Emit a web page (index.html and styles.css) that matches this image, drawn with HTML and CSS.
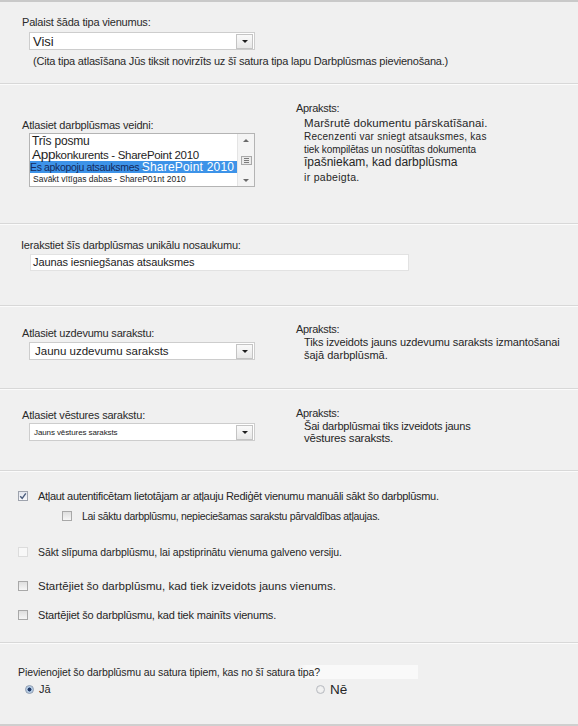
FILE: index.html
```html
<!DOCTYPE html>
<html lang="lv">
<head>
<meta charset="utf-8">
<title>Darbplūsma</title>
<link rel="stylesheet" href="styles.css">
</head>
<body>
<div class="page">

  <section class="sec s1">
    <div class="label">Palaist šāda tipa vienumus:</div>
    <div class="select sel-visi"><span class="val v-visi">Visi</span><span class="btn"></span></div>
    <div class="note">(Cita tipa atlasīšana Jūs tiksit novirzīts uz šī satura tipa lapu Darbplūsmas pievienošana.)</div>
  </section>

  <section class="sec s2 two">
    <div class="left l2">
      <div class="label">Atlasiet darbplūsmas veidni:</div>
      <div class="listbox">
        <div class="items">
          <div class="item i1">Trīs posmu</div>
          <div class="item i2"><span class="app">App</span>konkurents - SharePoint 2010</div>
          <div class="item i3"><span class="navy">Es apkopoju atsauksmes -</span><span class="wh">SharePoint 2010</span></div>
          <div class="item i4">Savākt vītīgas dabas - ShareP01nt 2010</div>
        </div>
        <div class="scroll">
          <span class="sarrow up"></span>
          <span class="thumb"><i></i><i></i><i></i></span>
          <span class="sarrow down"></span>
        </div>
      </div>
    </div>
    <div class="right r2">
      <div class="dh">Apraksts:</div>
      <div class="d d1">Maršrutē dokumentu pārskatīšanai.</div>
      <div class="d d2">Recenzenti var sniegt atsauksmes, kas</div>
      <div class="d d3">tiek kompilētas un nosūtītas dokumenta</div>
      <div class="d d4">īpašniekam, kad darbplūsma</div>
      <div class="d d5">ir pabeigta.</div>
    </div>
  </section>

  <section class="sec s3">
    <div class="label">Ierakstiet šīs darbplūsmas unikālu nosaukumu:</div>
    <div class="input">Jaunas iesniegšanas atsauksmes</div>
  </section>

  <section class="sec s4 two">
    <div class="left l4">
      <div class="label">Atlasiet uzdevumu sarakstu:</div>
      <div class="select sel-task"><span class="val v-task">Jaunu uzdevumu saraksts</span><span class="btn"></span></div>
    </div>
    <div class="right r4">
      <div class="dh">Apraksts:</div>
      <div class="d d41">Tiks izveidots jauns uzdevumu saraksts izmantošanai</div>
      <div class="d d42">šajā darbplūsmā.</div>
    </div>
  </section>

  <section class="sec s5 two">
    <div class="left l5">
      <div class="label">Atlasiet vēstures sarakstu:</div>
      <div class="select sel-hist"><span class="val v-hist">Jauns vēstures saraksts</span><span class="btn"></span></div>
    </div>
    <div class="right r5">
      <div class="dh">Apraksts:</div>
      <div class="d d51">Šai darbplūsmai tiks izveidots jauns</div>
      <div class="d d52">vēstures saraksts.</div>
    </div>
  </section>

  <section class="sec s6">
    <div class="row r-1">
      <span class="cb checked"><svg viewBox="0 0 10 10" width="10" height="10"><polyline points="2.2,5.2 4.2,7.3 7.8,2.4" fill="none" stroke="#4b5d7d" stroke-width="1.4"/></svg></span>
      <span class="t t1">Atļaut autentificētam lietotājam ar atļauju Rediģēt vienumu manuāli sākt šo darbplūsmu.</span>
    </div>
    <div class="row r-2">
      <span class="cb"></span>
      <span class="t t2">Lai sāktu darbplūsmu, nepieciešamas sarakstu pārvaldības atļaujas.</span>
    </div>
    <div class="row r-3">
      <span class="cb faint"></span>
      <span class="t t3">Sākt slīpuma darbplūsmu, lai apstiprinātu vienuma galveno versiju.</span>
    </div>
    <div class="row r-4">
      <span class="cb"></span>
      <span class="t t4">Startējiet šo darbplūsmu, kad tiek izveidots jauns vienums.</span>
    </div>
    <div class="row r-5">
      <span class="cb"></span>
      <span class="t t5">Startējiet šo darbplūsmu, kad tiek mainīts vienums.</span>
    </div>
  </section>

  <section class="sec s7">
    <div class="q">Pievienojiet šo darbplūsmu au satura tipiem, kas no šī satura tipa?</div>
    <div class="radios">
      <span class="opt opt-ja"><span class="radio on"></span><span class="rt rt-ja">Jā</span></span>
      <span class="opt opt-ne"><span class="radio"></span><span class="rt rt-ne">Nē</span></span>
    </div>
  </section>

</div>
</body>
</html>
```
FILE: styles.css
```css
html, body {
  margin: 0;
  padding: 0;
  background: #f0f0f0;
}
body {
  font-family: "Liberation Sans", Arial, sans-serif;
  font-size: 11px;
  color: #2b2b2b;
}
.page {
  width: 578px;
  height: 726px;
  box-sizing: border-box;
  border-top: 2px solid #c9c9c9;
  border-bottom: 2px solid #cfcfcf;
  display: flex;
  flex-direction: column;
}
.sec {
  box-sizing: border-box;
  border-bottom: 1px solid #d8d8d8;
  box-shadow: 0 1px 0 #fbfbfb;
  flex: none;
}
.s1 { height: 82px; padding: 14px 0 0 22px; }
.s2 { height: 140px; }
.s3 { height: 82px; padding: 14px 0 0 21px; }
.s4 { height: 83px; }
.s5 { height: 82px; }
.s6 { height: 172px; padding: 18px 0 0 18px; }
.s7 { flex: 1; border-bottom: none; box-shadow: none; padding: 22px 0 0 18px; }

.two {
  display: grid;
  grid-template-columns: 274px 1fr;
  padding-left: 22px;
}
.label {
  line-height: 14px;
  height: 14px;
  letter-spacing: -0.2px;
  color: #2a2a2a;
}
.s1 .label { height: 13px; line-height: 13px; }

/* select */
.select {
  box-sizing: border-box;
  width: 226px;
  height: 18px;
  background: #fff;
  border: 1px solid #cdcdcd;
  display: flex;
  align-items: center;
  margin-left: 7px;
}
.val { flex: 1; padding-left: 3px; color: #222; white-space: nowrap; overflow: hidden; }
.v-visi { font-size: 13px; padding-left: 3px; }
.v-task { font-size: 11.5px; padding-left: 5px; letter-spacing: 0; }
.v-hist { font-size: 8px; padding-left: 4px; letter-spacing: -0.1px; }
.btn {
  box-sizing: border-box;
  width: 17px;
  height: 15px;
  margin-right: 1px;
  border: 1px solid #c4c4c4;
  background: linear-gradient(#fafafa, #e8e8e8);
  display: flex;
  align-items: center;
  justify-content: center;
}
.btn::after {
  content: "";
  border-left: 3px solid transparent;
  border-right: 3px solid transparent;
  border-top: 3px solid #1e1e1e;
  margin-top: 1px;
}
.sel-visi { margin-top: 3px; }
.note {
  margin-top: 4px;
  margin-left: 11px;
  line-height: 14px;
  letter-spacing: -0.2px;
  color: #2a2a2a;
}

/* section 2 */
.l2 { padding-top: 34px; }
.r2 { padding-top: 17px; }
.listbox {
  box-sizing: border-box;
  margin-top: 1px;
  margin-left: 7px;
  width: 226px;
  height: 54px;
  border: 1px solid #b4b4b4;
  background: #fff;
  display: flex;
}
.items { flex: 1; padding-top: 1px; overflow: hidden; }
.item { white-space: nowrap; color: #1e1e1e; }
.i1 { height: 12px; line-height: 12px; font-size: 12px; padding-left: 2px; letter-spacing: -0.2px; }
.i2 { height: 14px; line-height: 15px; font-size: 11.5px; padding-left: 2px; letter-spacing: -0.3px; }
.app { font-size: 13.5px; letter-spacing: -0.3px; }
.i3 { height: 12px; line-height: 12px; background: #3d93e8; }
.navy { font-size: 10.5px; color: #142a5c; letter-spacing: -0.35px; }
.wh { font-size: 12px; color: #fff; letter-spacing: 0.2px; margin-left: -3px; }
.i4 { height: 12px; line-height: 12px; font-size: 8.5px; padding-left: 3px; letter-spacing: 0; }
.scroll {
  width: 17px;
  background: #f4f4f4;
  border-left: 1px solid #e4e4e4;
  display: flex;
  flex-direction: column;
  align-items: center;
  justify-content: space-between;
  padding: 5px 0 4px;
  box-sizing: border-box;
}
.sarrow { width: 0; height: 0; border-left: 3px solid transparent; border-right: 3px solid transparent; }
.sarrow.up { border-bottom: 3px solid #6a6a6a; }
.sarrow.down { border-top: 3px solid #6a6a6a; }
.thumb {
  box-sizing: border-box;
  width: 11px;
  height: 9px;
  border: 1px solid #a9a9a9;
  background: #eaeaea;
  display: flex;
  flex-direction: column;
  justify-content: center;
  align-items: center;
  gap: 1px;
}
.thumb i { display: block; width: 5px; height: 1px; background: #7a7a7a; }

.dh { height: 14px; line-height: 14px; letter-spacing: -0.3px; color: #2a2a2a; }
.d { padding-left: 8px; white-space: nowrap; color: #262626; }
.d1 { height: 16px; line-height: 16px; font-size: 11.5px; letter-spacing: 0.1px; }
.d2 { height: 12px; line-height: 12px; font-size: 10px; letter-spacing: 0.25px; }
.d3 { height: 14px; line-height: 14px; font-size: 10px; letter-spacing: -0.1px; }
.d4 { height: 10px; line-height: 10px; font-size: 12px; }
.d5 { height: 20px; line-height: 20px; font-size: 10.5px; letter-spacing: 0.3px; }

/* section 3 */
.input {
  box-sizing: border-box;
  margin-top: 2px;
  margin-left: 9px;
  width: 379px;
  height: 17px;
  background: #fff;
  border: 1px solid #e2e2e2;
  line-height: 15px;
  font-size: 11px;
  padding-left: 2px;
  color: #222;
  letter-spacing: -0.1px;
}

/* section 4 */
.l4 { padding-top: 20px; }
.l4 .select { margin-top: 2px; }
.r4 { padding-top: 16px; }
.d41 { height: 13px; line-height: 13px; font-size: 11px; letter-spacing: -0.1px; }
.d42 { height: 13px; line-height: 13px; font-size: 11px; }

/* section 5 */
.l5 { padding-top: 19px; }
.l5 .select { margin-top: 1px; }
.r5 { padding-top: 17px; }
.d51 { height: 12px; line-height: 12px; font-size: 11px; letter-spacing: -0.2px; }
.d52 { height: 12px; line-height: 12px; font-size: 11.5px; letter-spacing: -0.2px; }

/* section 6 */
.row {
  display: flex;
  align-items: center;
  height: 14px;
}
.cb {
  box-sizing: border-box;
  width: 10px;
  height: 10px;
  border: 1px solid #a8a8a8;
  background: linear-gradient(#dedede, #f6f6f6);
  margin-right: 10px;
  flex: none;
  display: flex;
}
.cb svg { display: block; margin: -1px; }
.cb.checked { background: linear-gradient(#e3e6ee, #f7f8fb); border-color: #9ea3ad; }
.cb.faint { border-color: #dcdcdc; background: #f8f8f8; }
.t { white-space: nowrap; color: #262626; }
.t1 { font-size: 11px; letter-spacing: -0.3px; }
.t2 { font-size: 10.5px; letter-spacing: -0.3px; }
.t3 { font-size: 10.5px; letter-spacing: -0.1px; }
.t4 { font-size: 11.5px; letter-spacing: 0; }
.t5 { font-size: 11px; letter-spacing: -0.2px; }
.r-2 { margin-top: 6px; padding-left: 44px; }
.r-3 { margin-top: 22px; }
.r-4 { margin-top: 20px; }
.r-5 { margin-top: 15px; }

/* section 7 */
.q {
  height: 14px;
  line-height: 14px;
  font-size: 10.5px;
  letter-spacing: -0.1px;
  color: #262626;
  width: 400px;
  background: linear-gradient(90deg, rgba(255,255,255,0) 70%, rgba(255,255,255,0.6) 72%, rgba(255,255,255,0.6) 100%);
}
.radios {
  margin-top: 3px;
  height: 14px;
  display: flex;
  align-items: center;
}
.opt { display: flex; align-items: center; }
.opt-ja { padding-left: 7px; width: 291px; }
.radio {
  box-sizing: border-box;
  width: 9px;
  height: 9px;
  border-radius: 50%;
  border: 1px solid #b9bcc2;
  background: radial-gradient(circle, #f2f2f2 0 40%, #dcdcdc 100%);
  margin-right: 5px;
}
.radio.on {
  border-color: #8d9bb0;
  background: radial-gradient(circle, #233a66 0 35%, #a9c3e0 45%, #dce6f0 100%);
}
.rt { color: #262626; }
.rt-ja { font-size: 11px; }
.rt-ne { font-size: 13.5px; }
```
